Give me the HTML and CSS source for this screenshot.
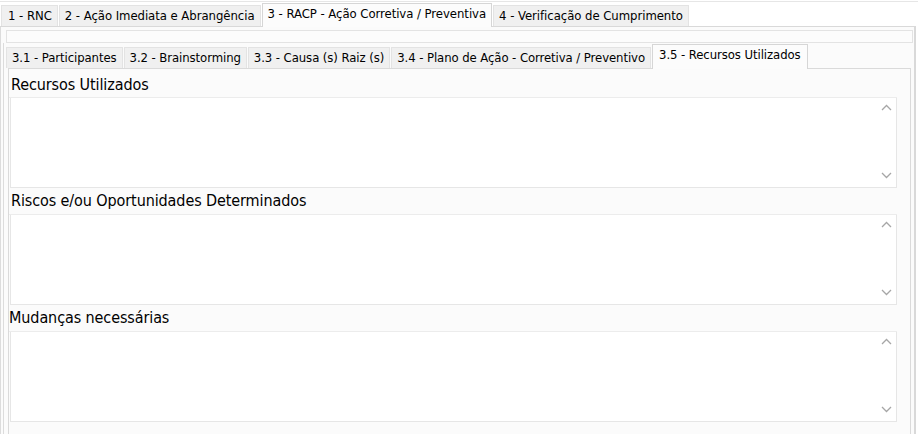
FILE: index.html
```html
<!DOCTYPE html>
<html lang="pt-BR">
<head>
    <meta charset="UTF-8">
    <title>RACP - Recursos Utilizados</title>
    <link rel="stylesheet" href="styles.css">
</head>
<body>

    <!-- Abas principais -->
    <div class="main-tabs">
        <div class="tab">1 - RNC</div>
        <div class="tab">2 - Ação Imediata e Abrangência</div>
        <div class="tab active">3 - RACP - Ação Corretiva / Preventiva</div>
        <div class="tab">4 - Verificação de Cumprimento</div>
    </div>

    <div class="main-panel">
        <div class="blank-strip"></div>

        <!-- Sub abas -->
        <div class="sub-panel">
            <div class="sub-tabs">
                <div class="tab">3.1 - Participantes</div>
                <div class="tab">3.2 - Brainstorming</div>
                <div class="tab">3.3 - Causa (s) Raiz (s)</div>
                <div class="tab">3.4 - Plano de Ação - Corretiva / Preventivo</div>
                <div class="tab active">3.5 - Recursos Utilizados</div>
            </div>

            <div class="content">
                <div class="field">
                    <div class="field-label">Recursos Utilizados</div>
                    <div class="memo">
                        <svg class="arrow up" width="11" height="7" viewBox="0 0 11 7"><path d="M1 6 L5.5 1.5 L10 6" fill="none" stroke="#a6a6a6" stroke-width="1.3"/></svg>
                        <svg class="arrow down" width="11" height="7" viewBox="0 0 11 7"><path d="M1 1 L5.5 5.5 L10 1" fill="none" stroke="#a6a6a6" stroke-width="1.3"/></svg>
                    </div>
                </div>
                <div class="field">
                    <div class="field-label">Riscos e/ou Oportunidades Determinados</div>
                    <div class="memo">
                        <svg class="arrow up" width="11" height="7" viewBox="0 0 11 7"><path d="M1 6 L5.5 1.5 L10 6" fill="none" stroke="#a6a6a6" stroke-width="1.3"/></svg>
                        <svg class="arrow down" width="11" height="7" viewBox="0 0 11 7"><path d="M1 1 L5.5 5.5 L10 1" fill="none" stroke="#a6a6a6" stroke-width="1.3"/></svg>
                    </div>
                </div>
                <div class="field">
                    <div class="field-label shifted">Mudanças necessárias</div>
                    <div class="memo">
                        <svg class="arrow up" width="11" height="7" viewBox="0 0 11 7"><path d="M1 6 L5.5 1.5 L10 6" fill="none" stroke="#a6a6a6" stroke-width="1.3"/></svg>
                        <svg class="arrow down" width="11" height="7" viewBox="0 0 11 7"><path d="M1 1 L5.5 5.5 L10 1" fill="none" stroke="#a6a6a6" stroke-width="1.3"/></svg>
                    </div>
                </div>
            </div>
        </div>
    </div>

</body>
</html>
```

FILE: styles.css
```css
/* Reset */
* {
    margin: 0;
    padding: 0;
    box-sizing: border-box;
}

body {
    font-family: 'DejaVu Sans Condensed', 'DejaVu Sans', sans-serif;
    font-stretch: condensed;
    color: #000;
    background-color: #fff;
    width: 918px;
    height: 434px;
    overflow: hidden;
    border-top: 1px solid #e6e6e6;
    margin-top: 1px;
}

/* Tabs */
.main-tabs,
.sub-tabs {
    display: flex;
    align-items: flex-end;
}

.main-tabs {
    height: 24px;
    padding-left: 1px;
}

.tab {
    height: 21px;
    padding: 0 5px;
    font-size: 13px;
    line-height: 20px;
    letter-spacing: -0.05px;
    background-color: #f0f0f0;
    border: 1px solid #e3e3e3;
    border-bottom: none;
    white-space: nowrap;
}

.tab + .tab {
    margin-left: 1px;
}

.tab.active {
    height: 24px;
    line-height: 20px;
    background-color: #fcfcfc;
    border-color: #d6d6d6;
    margin-bottom: -1px;
    position: relative;
    z-index: 1;
}

.main-tabs .tab:first-child {
    padding-left: 6px;
}

/* Main panel */
.main-panel {
    height: 410px;
    border-top: 1px solid #d9d9d9;
    border-left: 1px solid #dcdcdc;
    border-right: 2px solid #d9d9d9;
    background-color: #fbfbfb;
    padding: 3px 0 0 2px;
    margin-right: 2px;
}

.blank-strip {
    height: 13px;
    margin: 0 1px 0 3px;
    background-color: #fcfcfc;
    border: 1px solid #e3e3e3;
}

.sub-panel {
    border-left: 1px solid #dcdcdc;
    height: 400px;
    padding-left: 2px;
}

.sub-tabs {
    height: 25px;
}

.sub-tabs .tab {
    letter-spacing: -0.08px;
}

.sub-tabs .tab.active {
    height: 25px;
    padding: 0 6px;
}

/* Content */
.content {
    border: 1px solid #dadada;
    border-bottom: none;
    background-color: #fbfbfb;
    margin-left: 2px;
    margin-right: 3px;
    height: 370px;
    padding: 0 13px 0 0;
}

.field-label {
    height: 29px;
    padding: 6px 0 0 2px;
    font-size: 16px;
    line-height: 20px;
    letter-spacing: -0.1px;
    border-bottom: 1px solid #ececec;
}

.field + .field .field-label {
    height: 27px;
    padding-top: 3px;
}

.field-label.shifted {
    padding-left: 0;
}

.memo {
    position: relative;
    height: 90px;
    margin-left: 1px;
    background-color: #fff;
    border: 1px solid #e6e6e6;
    border-top: none;
}

.arrow {
    position: absolute;
    right: 4px;
}

.arrow.up {
    top: 6px;
}

.arrow.down {
    bottom: 8px;
}
```
